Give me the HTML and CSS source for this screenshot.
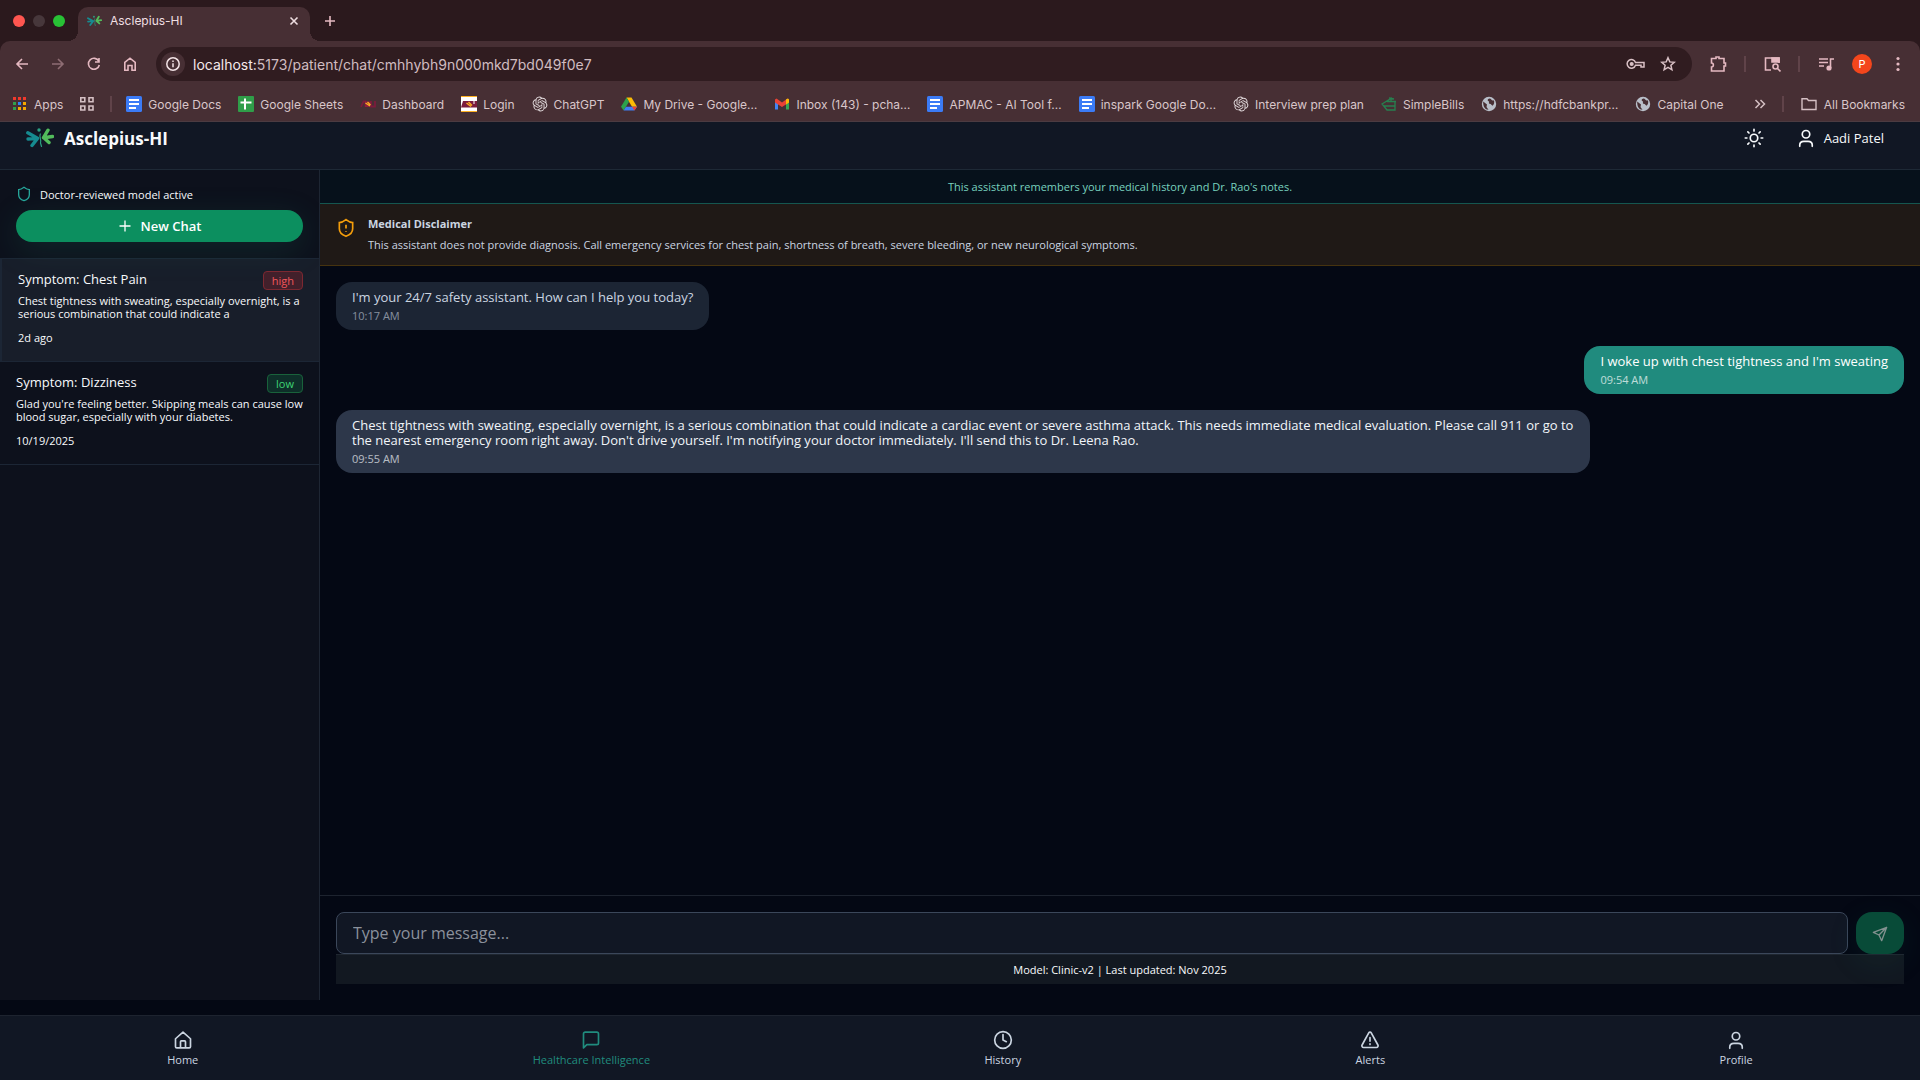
FILE: index.html
```html
<!DOCTYPE html>
<html lang="en">
<head>
<meta charset="utf-8">
<title>Asclepius-HI</title>
<link rel="stylesheet" href="styles.css">
</head>
<body>
<svg class="defs" aria-hidden="true">
  <defs>
    <symbol id="logo" viewBox="0 0 28 20">
      <g fill="none" stroke-linecap="round" stroke-linejoin="round">
        <path d="M1.800 4.800 L11.500 10.200 M2 11 L11 10.400 M6 17.500 L11.500 10.400" stroke="#168b90" stroke-width="3.400"/>
        <path d="M26.500 8.500 L17.500 9.800 M22 2.200 L17.500 9.600 L23 14.500" stroke="#52bd5c" stroke-width="3.400"/>
        <path d="M14.300 6 C12.800 9 15.800 12 14.500 15 L15.500 18.500" stroke="#2ba183" stroke-width="1.200"/>
      </g>
      <circle cx="13" cy="2" r="1.700" fill="#2ba183"/>
    </symbol>
    <symbol id="doc" viewBox="0 0 16 16"><rect width="16" height="16" rx="1.500" fill="#3b7bf6"/><path d="M3 4h10M3 8h10M3 12h7" stroke="#fff" stroke-width="2"/></symbol>
    <symbol id="gpt" viewBox="-1 -1 26 26"><path fill="#e2dadc" d="M22.2819 9.8211a5.9847 5.9847 0 0 0-.5157-4.9108 6.0462 6.0462 0 0 0-6.5098-2.9A6.0651 6.0651 0 0 0 4.9807 4.1818a5.9847 5.9847 0 0 0-3.9977 2.9 6.0462 6.0462 0 0 0 .7427 7.0966 5.98 5.98 0 0 0 .511 4.9107 6.051 6.051 0 0 0 6.5146 2.9001A5.9847 5.9847 0 0 0 13.2599 24a6.0557 6.0557 0 0 0 5.7718-4.2058 5.9894 5.9894 0 0 0 3.9977-2.9001 6.0557 6.0557 0 0 0-.7475-7.0729zm-9.022 12.6081a4.4755 4.4755 0 0 1-2.8764-1.0408l.1419-.0804 4.7783-2.7582a.7948.7948 0 0 0 .3927-.6813v-6.7369l2.02 1.1686a.071.071 0 0 1 .038.052v5.5826a4.504 4.504 0 0 1-4.4945 4.4944zm-9.6607-4.1254a4.4708 4.4708 0 0 1-.5346-3.0137l.142.0852 4.783 2.7582a.7712.7712 0 0 0 .7806 0l5.8428-3.3685v2.3324a.0804.0804 0 0 1-.0332.0615L9.74 19.9502a4.4992 4.4992 0 0 1-6.1408-1.6464zM2.3408 7.8956a4.485 4.485 0 0 1 2.3655-1.9728V11.6a.7664.7664 0 0 0 .3879.6765l5.8144 3.3543-2.0201 1.1685a.0757.0757 0 0 1-.071 0l-4.8303-2.7865A4.504 4.504 0 0 1 2.3408 7.872zm16.5963 3.8558L13.1038 8.364 15.1192 7.2a.0757.0757 0 0 1 .071 0l4.8303 2.7913a4.4944 4.4944 0 0 1-.6765 8.1042v-5.6772a.79.79 0 0 0-.407-.667zm2.0107-3.0231l-.142-.0852-4.7735-2.7818a.7759.7759 0 0 0-.7854 0L9.409 9.2297V6.8974a.0662.0662 0 0 1 .0284-.0615l4.8303-2.7866a4.4992 4.4992 0 0 1 6.6802 4.66zM8.3065 12.863l-2.02-1.1638a.0804.0804 0 0 1-.038-.0567V6.0742a4.4992 4.4992 0 0 1 7.3757-3.4537l-.142.0805L8.704 5.459a.7948.7948 0 0 0-.3927.6813zm1.0976-2.3654l2.602-1.4998 2.6069 1.4998v2.9994l-2.5974 1.4997-2.6067-1.4997Z"/></symbol>
    <symbol id="globe" viewBox="0 0 16 16"><circle cx="8" cy="8" r="7.200" fill="#b9bfc9"/><path d="M2.200 5.500 6 8.500 5.500 11l2 2.800C4 13.500 2 11 2.200 5.500ZM8.500 2.500c-2 .5-2.500 2-1 2.800 1.500.7-.5 1.700 1 2.400 2 .3 2 1.500 3 2 1.500-1 2.300-3.500 1.300-5.500-2 1-2.500-1.500-4.300-1.700Z" fill="#472f34"/></symbol>
    <symbol id="user" viewBox="0 0 24 24"><circle cx="12" cy="7.500" r="4.500"/><path d="M4.500 22v-1.500c0-3 2.500-4.500 5-4.500h5c2.500 0 5 1.500 5 4.500V22"/></symbol>
  </defs>
</svg>

<header class="browser">
  <div class="tabstrip">
    <div class="lights"><i class="light red"></i><i class="light dim"></i><i class="light green"></i></div>
    <div class="tab">
      <svg class="favicon"><use href="#logo"/></svg>
      <span class="tab-title">Asclepius-HI</span>
      <button class="plain" aria-label="Close tab"><svg width="10" height="10" viewBox="0 0 10 10"><path d="M1.500 1.500l7 7m0-7l-7 7" stroke="#eedde0" stroke-width="1.600"/></svg></button>
    </div>
    <button class="plain new-tab" aria-label="New tab"><svg width="12" height="12" viewBox="0 0 12 12"><path d="M6 1v10M1 6h10" stroke="#e5b9c1" stroke-width="1.600"/></svg></button>
  </div>

  <div class="toolbar">
    <div class="tools">
      <button class="tool" aria-label="Back"><svg viewBox="0 0 18 18"><path d="M15 9H4M9 4 4 9l5 5"/></svg></button>
      <button class="tool faded" aria-label="Forward"><svg viewBox="0 0 18 18"><path d="M3 9h11M9 4l5 5-5 5"/></svg></button>
      <button class="tool" aria-label="Reload"><svg viewBox="0 0 18 18"><path d="M13.800 6.200A5.500 5.500 0 1 0 14.300 10M14 3v4h-4"/></svg></button>
      <button class="tool" aria-label="Home page"><svg viewBox="0 0 18 18"><path d="M3.800 7.300 9 3.200l5.200 4.100v8H11V10.500H7v4.800H3.800Z"/></svg></button>
    </div>
    <div class="omnibox">
      <button class="plain info" aria-label="Site information"><svg width="16" height="16" viewBox="0 0 16 16" fill="none" stroke="#f3e3e6" stroke-width="1.500"><circle cx="8" cy="8" r="6.200"/><path d="M8 7.200v4M8 4.500v1.500"/></svg></button>
      <div class="url"><span class="host">localhost:</span>5173/patient/chat/cmhhybh9n000mkd7bd049f0e7</div>
      <button class="plain" aria-label="Passwords"><svg width="20" height="16" viewBox="0 0 20 16" fill="none" stroke="#d9c0c5" stroke-width="1.500"><path d="M9.500 6.500H18V11h-3V9.200H9.500A4.300 4.300 0 1 1 9.500 6.500Z"/><circle cx="5.700" cy="8" r="1.300" fill="#d9c0c5"/></svg></button>
      <button class="plain" aria-label="Bookmark this tab"><svg width="16" height="16" viewBox="0 0 16 16" fill="none" stroke="#d9c0c5" stroke-width="1.500"><path d="m8 1.700 1.800 4.200 4.500.4-3.400 3 1 4.500L8 11.400l-3.900 2.400 1-4.500-3.400-3 4.500-.4Z"/></svg></button>
    </div>
    <div class="tools spaced">
      <button class="tool" aria-label="Extensions"><svg viewBox="0 0 18 18"><path d="M2.500 3.500H7V2h3v1.500h5V8h1.500v3H15v5H2.500v-4c2.500 0 2.500-4 0-4Z"/></svg></button>
      <i class="rule"></i>
      <button class="tool" aria-label="Lens"><svg viewBox="0 0 18 18"><path d="M8 15H2.500V3H16v5"/><path d="M9 3h7v4H9Z" fill="#e5b9c1"/><circle cx="12.500" cy="11.500" r="2.500"/><path d="m14.500 13.500 3 3"/></svg></button>
      <i class="rule"></i>
    </div>
    <div class="tools">
      <button class="tool" aria-label="Media controls"><svg viewBox="0 0 18 18"><path d="M2 4h9M2 7.500h9M2 11h5M17 4h-3.500v9"/><circle cx="12" cy="13" r="1.800" fill="#e5b9c1"/></svg></button>
      <button class="tool" aria-label="Account"><span class="avatar">P</span></button>
      <button class="tool" aria-label="Menu"><svg viewBox="0 0 16 16" class="dots"><circle cx="8" cy="2.500" r="1.600"/><circle cx="8" cy="8" r="1.600"/><circle cx="8" cy="13.500" r="1.600"/></svg></button>
    </div>
  </div>

  <nav class="bookmarks" aria-label="Bookmarks">
    <a href="#" class="apps"><svg viewBox="0 0 14 14"><path d="M0 0h3v3H0zM5 0h3v3H5zM10 0h3v3h-3z" fill="#f2392c"/><path d="M0 5h3v3H0zM0 10h3v3H0z" fill="#31a04c"/><path d="M5 5h3v3H5z" fill="#2e83f7"/><path d="M10 5h3v3h-3zM5 10h3v3H5zM10 10h3v3h-3z" fill="#f5a700"/></svg>Apps</a>
    <button class="plain groups" aria-label="Tab groups"><svg width="16" height="16" viewBox="0 0 16 16" fill="none" stroke="#d5c0c4" stroke-width="1.600"><path d="M1.800 1.800h4v4h-4zM10 1.800h4v4h-4zM1.800 10h4v4h-4zM10 10h4v4h-4z"/></svg></button>
    <i class="rule"></i>
    <div class="links">
      <a href="#"><svg><use href="#doc"/></svg>Google Docs</a>
      <a href="#"><svg viewBox="0 0 16 16"><rect width="16" height="16" rx="1" fill="#2f9e49"/><path d="M7 2.500v11M2.500 6.500h11" stroke="#fff" stroke-width="2"/></svg>Google Sheets</a>
      <a href="#"><svg viewBox="0 0 16 16"><path d="M1 11 3.500 5.500h2V11M11 5v5.500h4V5" fill="none" stroke="#7b1c3c" stroke-width="1.800"/><path d="M5 5.500h6l-1 5.500H5Z" fill="#8d1d3d"/><path d="m5.500 7 4.500 3M7.500 6l3 3" stroke="#fdb022" stroke-width="1.300"/></svg>Dashboard</a>
      <a href="#"><svg viewBox="0 0 16 16"><path fill="#fff" d="M0 0h16v16H0z"/><path d="M0 0h16v1H0zM0 15h16v1H0z" fill="#fdb022"/><path d="M0 11.500 2 5h14v6.500Z" fill="#7b1c3c"/><path d="m5.500 7 4.500 3.500M7.500 6l3.500 3.500" stroke="#fdb022" stroke-width="1.400"/><path d="M13 5v3" stroke="#fff"/></svg>Login</a>
      <a href="#"><svg><use href="#gpt"/></svg>ChatGPT</a>
      <a href="#"><svg viewBox="0 0 16 16"><path d="M5.500 1.500h5L16 10.800h-5Z" fill="#fbbc05"/><path d="M5.500 1.500 0 10.800l2.600 3.700L8 5.800Z" fill="#2ca24c"/><path d="M2.600 14.500h10.800l2.600-3.700H5Z" fill="#3f7ef3"/><path d="m16 10.800-2.600 3.700L11 10.800Z" fill="#ea4335"/></svg>My Drive - Google…</a>
      <a href="#"><svg viewBox="0 0 16 16"><path d="M1 4v9.500h3V7Z" fill="#4285f4"/><path d="M15 4v9.500h-3V7Z" fill="#34a853"/><path d="M1 3.500 2.500 2.500 8 6.500l5.500-4L15 4v2.500L8 11 1 6.500Z" fill="#ea4335"/><path d="m12 3.500 2-1 1 1v3l-3 2Z" fill="#fbbc05"/></svg>Inbox (143) - pcha…</a>
      <a href="#"><svg><use href="#doc"/></svg>APMAC - AI Tool f…</a>
      <a href="#"><svg><use href="#doc"/></svg>inspark Google Do…</a>
      <a href="#"><svg><use href="#gpt"/></svg>Interview prep plan</a>
      <a href="#"><svg viewBox="0 0 16 16" fill="none" stroke="#27804f" stroke-width="1.300"><path d="m1 8 9-5.500v3H14V14H6Zm5-2.500h9M3 10h11M8 2l5 1"/></svg>SimpleBills</a>
      <a href="#"><svg><use href="#globe"/></svg>https://hdfcbankpr…</a>
      <a href="#"><svg><use href="#globe"/></svg>Capital One</a>
    </div>
    <button class="plain more" aria-label="More bookmarks"><svg width="12" height="12" viewBox="0 0 12 12" fill="none" stroke="#d5c0c4" stroke-width="1.500"><path d="m1.500 2 4 4-4 4M6.500 2l4 4-4 4"/></svg></button>
    <i class="rule"></i>
    <a href="#" class="all"><svg viewBox="0 0 16 16" fill="none" stroke="#d5c0c4" stroke-width="1.400"><path d="M1 2.700h5l1.500 1.800H15v9H1Z"/></svg>All Bookmarks</a>
  </nav>
</header>

<div class="app">
  <header class="topbar">
    <a href="#" class="brand"><svg width="28" height="20"><use href="#logo"/></svg><span>Asclepius-HI</span></a>
    <button class="plain" aria-label="Toggle theme"><svg class="line" viewBox="0 0 24 24"><circle cx="12" cy="12" r="4.500"/><path d="M12 1.500v2M12 20.500v2M1.500 12h2M20.500 12h2M4.600 4.600 6 6M18 18l1.400 1.400M4.600 19.400 6 18M18 6l1.400-1.400"/></svg></button>
    <button class="plain account"><svg class="line" viewBox="0 0 24 24"><use href="#user"/></svg>Aadi Patel</button>
  </header>

  <div class="workspace">
    <aside class="sidebar">
      <div class="side-head">
        <div class="status"><svg viewBox="0 0 24 24"><path d="M20 13c0 5-3.500 7.500-8 9-4.500-1.500-8-4-8-9V5.500C7 5.500 9.500 4 12 2c2.500 2 5 3.500 8 3.500Z"/></svg>Doctor-reviewed model active</div>
        <button class="new-chat"><svg width="14" height="14" viewBox="0 0 14 14"><path d="M7 1.500v11M1.500 7h11" stroke="currentColor" stroke-width="1.300"/></svg>New Chat</button>
      </div>
      <a href="#" class="thread current">
        <span class="thread-top"><span class="thread-title">Symptom: Chest Pain</span><span class="badge high">high</span></span>
        <span class="preview">Chest tightness with sweating, especially overnight, is a serious combination that could indicate a</span>
        <span class="date">2d ago</span>
      </a>
      <a href="#" class="thread">
        <span class="thread-top"><span class="thread-title">Symptom: Dizziness</span><span class="badge low">low</span></span>
        <span class="preview">Glad you're feeling better. Skipping meals can cause low blood sugar, especially with your diabetes.</span>
        <span class="date">10/19/2025</span>
      </a>
    </aside>

    <main class="chat">
      <p class="memory">This assistant remembers your medical history and Dr. Rao's notes.</p>
      <section class="disclaimer">
        <svg viewBox="0 0 24 24"><path d="M20 13c0 5-3.500 7.500-8 9-4.500-1.500-8-4-8-9V5.500C7 5.500 9.500 4 12 2c2.500 2 5 3.500 8 3.500ZM12 8v4.500M12 15.500v1"/></svg>
        <div><h2>Medical Disclaimer</h2><p>This assistant does not provide diagnosis. Call emergency services for chest pain, shortness of breath, severe bleeding, or new neurological symptoms.</p></div>
      </section>
      <div class="messages">
        <article class="bubble greeting"><p>I'm your 24/7 safety assistant. How can I help you today?</p><time>10:17 AM</time></article>
        <article class="bubble mine"><p>I woke up with chest tightness and I'm sweating</p><time>09:54 AM</time></article>
        <article class="bubble"><p>Chest tightness with sweating, especially overnight, is a serious combination that could indicate a cardiac event or severe asthma attack. This needs immediate medical evaluation. Please call 911 or go to the nearest emergency room right away. Don't drive yourself. I'm notifying your doctor immediately. I'll send this to Dr. Leena Rao.</p><time>09:55 AM</time></article>
      </div>
      <div class="composer">
        <form class="compose-row">
          <input type="text" placeholder="Type your message..." aria-label="Type your message">
          <button class="send" type="button" aria-label="Send" disabled><svg width="16" height="16" viewBox="0 0 24 24"><path d="M22 2 14.500 22l-4-8.500L2 9.500ZM22 2 10.500 13.500"/></svg></button>
        </form>
        <p class="model">Model: Clinic-v2 | Last updated: Nov 2025</p>
      </div>
    </main>
  </div>

  <nav class="bottom-nav" aria-label="Main">
    <a href="#"><svg viewBox="0 0 24 24"><path d="M3 10.500 12 2.500l9 8V20a1.500 1.500 0 0 1-1.500 1.500h-15A1.500 1.500 0 0 1 3 20ZM9 21.500V14a1 1 0 0 1 1-1h4a1 1 0 0 1 1 1v7.500"/></svg>Home</a>
    <a href="#" class="active"><svg viewBox="0 0 24 24"><path d="M21 15.500a2 2 0 0 1-2 2H7l-4 4V4.500a2 2 0 0 1 2-2h14a2 2 0 0 1 2 2Z"/></svg>Healthcare Intelligence</a>
    <a href="#"><svg viewBox="0 0 24 24"><circle cx="12" cy="12" r="10"/><path d="M12 5.500V12l4 2"/></svg>History</a>
    <a href="#"><svg viewBox="0 0 24 24"><path d="M10.500 3.500a1.700 1.700 0 0 1 3 0l8 14.500a2 2 0 0 1-1.700 3H4.200a2 2 0 0 1-1.700-3ZM12 9v4.500M12 16.500v1"/></svg>Alerts</a>
    <a href="#"><svg viewBox="0 0 24 24"><use href="#user"/></svg>Profile</a>
  </nav>
</div>
</body>
</html>
```
FILE: styles.css
```css
* { box-sizing: border-box; margin: 0; padding: 0; }
body {
  min-height: 100vh;
  display: flex;
  flex-direction: column;
  background: #040814;
  color: #f8fafc;
  font-family: "Open Sans", "Noto Sans", sans-serif;
  font-size: 13px;
}
a { color: inherit; text-decoration: none; }
button { font: inherit; color: inherit; border: 0; cursor: pointer; }
svg { flex: none; }
.defs { position: absolute; width: 0; height: 0; }
.plain { display: flex; align-items: center; background: none; }

/* Browser frame */
.browser {
  background: #2b191d;
  border-bottom: 1px solid #4c3b41;
  color: #d9c6ca;
  font-family: Inter, sans-serif;
  font-size: 12px;
}
.tabstrip { display: flex; align-items: center; height: 41px; }
.lights { display: flex; gap: 8px; padding: 0 13px; width: 78px; }
.light { width: 12px; height: 12px; border-radius: 50%; }
.red { background: #ff5650; }
.dim { background: #47373b; }
.green { background: #28c135; }
.tab {
  position: relative;
  align-self: flex-end;
  display: flex;
  align-items: center;
  gap: 8px;
  width: 232px;
  height: 34px;
  padding: 0 11px 7px 9px;
  border-radius: 10px 10px 0 0;
  background: #472f34;
  color: #f0dfe2;
}
.tab::before, .tab::after {
  content: "";
  position: absolute;
  bottom: 0;
  width: 10px;
  height: 10px;
}
.tab::before { left: -10px; background: radial-gradient(circle at 0 0, #2b191d 10px, #472f34 10px); }
.tab::after { right: -10px; background: radial-gradient(circle at 100% 0, #2b191d 10px, #472f34 10px); }
.favicon { width: 15px; height: 12px; }
.tab-title { flex: 1; }
.new-tab { padding: 0 14px; }

.toolbar {
  display: flex;
  align-items: center;
  height: 46px;
  padding: 0 4px;
  border-radius: 10px 10px 0 0;
  background: #472f34;
}
.tools { display: flex; align-items: center; }
.spaced { gap: 8px; padding: 0 8px; }
.tool { display: flex; align-items: center; justify-content: center; width: 36px; height: 36px; background: none; }
.tool svg { width: 18px; height: 18px; fill: none; stroke: #e5b9c1; stroke-width: 1.6px; }
.tool svg.dots { width: 16px; height: 16px; fill: #e5b9c1; stroke: none; }
.faded { opacity: .45; }
.rule { width: 2px; height: 16px; background: #604349; }
.avatar { width: 20px; height: 20px; border-radius: 50%; background: #f4461c; color: #fff; font-size: 11px; line-height: 20px; }
.omnibox {
  flex: 1;
  display: flex;
  align-items: center;
  gap: 14px;
  height: 34px;
  margin-left: 8px;
  padding: 0 16px 0 5px;
  border-radius: 17px;
  background: #301c20;
}
.info { justify-content: center; width: 24px; height: 24px; border-radius: 50%; background: #472f34; }
.url { flex: 1; margin-left: -6px; font-size: 14px; color: #d0bcc0; }
.host { color: #f5e9eb; }

.bookmarks { display: flex; align-items: center; height: 34px; padding: 0 15px 0 13px; background: #472f34; white-space: nowrap; }
.bookmarks a { display: flex; align-items: center; gap: 6px; }
.bookmarks a svg { width: 16px; height: 16px; }
.bookmarks .apps { gap: 7px; }
.bookmarks .apps svg { width: 14px; height: 14px; }
.groups { padding: 0 15px 0 16px; }
.links { flex: 1; display: flex; gap: 17px; padding-left: 14px; }
.more { padding: 0 16px; }
.bookmarks .all { gap: 7px; padding-left: 17px; }

/* Application */
.app { flex: 1; display: flex; flex-direction: column; }
.topbar {
  display: flex;
  align-items: center;
  gap: 32px;
  height: 48px;
  padding: 0 36px 15px 26px;
  border-bottom: 1px solid #1e2936;
  background: #111724;
}
.brand { display: flex; align-items: center; gap: 10px; margin-right: auto; font-size: 17px; font-weight: 700; }
.line { width: 20px; height: 20px; fill: none; stroke: #f8fafc; stroke-width: 2px; stroke-linecap: round; }
.account { gap: 8px; font-weight: 500; }

.workspace { flex: 1; display: flex; margin-bottom: 15px; }
.sidebar { width: 320px; border-right: 1px solid #1e2633; background: #0d111c; overflow: hidden; }
.side-head { padding: 16px; border-bottom: 1px solid #1c2635; }
.status { display: flex; align-items: center; gap: 8px; height: 16px; margin-bottom: 8px; font-size: 11px; font-weight: 500; }
.status svg { width: 16px; height: 16px; fill: none; stroke: #26a69a; stroke-width: 2px; }
.new-chat {
  display: flex;
  align-items: center;
  justify-content: center;
  gap: 9px;
  width: 100%;
  height: 32px;
  border-radius: 16px;
  background: #0c8f5f;
  color: #fff;
  font-weight: 600;
  box-shadow: 0 8px 32px rgba(32, 140, 110, .18);
}
.thread { display: block; padding: 12px 16px 13px; border-bottom: 1px solid #1c2635; }
.current { border-left: 2px solid #1c2635; background: rgba(38, 47, 60, .45); }
.thread-top { display: flex; justify-content: space-between; align-items: center; height: 19px; margin-bottom: 4px; }
.thread-title { line-height: 16px; padding-bottom: 4px; font-weight: 500; }
.badge { height: 19px; padding: 0 8px; border: 1px solid; border-radius: 4px; font-size: 11px; line-height: 17px; }
.high { color: #f2575b; background: #42202b; border-color: #7c2831; }
.low { color: #3ed274; background: #0e2f29; border-color: #19623b; }
.preview { display: block; font-size: 11px; line-height: 13px; margin-bottom: 8px; }
.date { display: block; font-size: 11px; line-height: 20px; }

.chat { flex: 1; min-width: 0; display: flex; flex-direction: column; }
.memory { padding: 8px 16px; border-bottom: 1px solid #15564f; background: #06111b; color: #78d2bf; font-size: 11px; line-height: 17px; text-align: center; }
.disclaimer { display: flex; align-items: flex-start; gap: 12px; padding: 12px 16px; border-bottom: 1px solid #46330f; background: #1f1916; color: #cbd5e1; font-size: 11px; }
.disclaimer svg { width: 20px; height: 20px; margin-top: 2px; fill: none; stroke: #f59e0b; stroke-width: 2px; }
.disclaimer h2 { margin-bottom: 4px; font-size: 11px; font-weight: 700; line-height: 16px; }
.disclaimer p { line-height: 17px; }
.messages { flex: 1; display: flex; flex-direction: column; align-items: flex-start; gap: 16px; padding: 16px; }
.bubble { max-width: 80%; padding: 8px 16px; border-radius: 16px; background: #2d374a; color: #f1f5f9; line-height: 15px; }
.bubble time { display: block; margin-top: 4px; font-size: 11px; line-height: 13px; opacity: .7; }
.greeting { background: #1c2534; color: #cbd5e1; }
.greeting time { opacity: .6; }
.mine { align-self: flex-end; background: #208b7e; color: #fff; }

.composer { padding: 16px; border-top: 1px solid #1d232f; }
.compose-row { display: flex; gap: 8px; }
.compose-row input {
  flex: 1;
  height: 42px;
  padding: 0 16px;
  border: 1px solid #3b475a;
  border-radius: 8px;
  background: #111724;
  color: #f8fafc;
  font: inherit;
  font-size: 16px;
}
.compose-row input::placeholder { color: #8b919c; opacity: 1; }
.send { width: 48px; border-radius: 16px; background: #084b38; box-shadow: 0 8px 32px rgba(32, 140, 110, .1); }
.send svg { fill: none; stroke: #82918f; stroke-width: 2px; stroke-linejoin: round; vertical-align: middle; }
.model { border-top: 1px solid #1f2630; background: #121821; font-size: 11px; line-height: 29px; text-align: center; }

.bottom-nav { display: flex; justify-content: space-around; height: 65px; padding-top: 14px; border-top: 1px solid #1d232f; background: #111724; color: #cbd5e1; }
.bottom-nav a { display: flex; flex-direction: column; align-items: center; gap: 2px; font-size: 11px; line-height: 16px; }
.bottom-nav svg { width: 20px; height: 20px; fill: none; stroke: currentColor; stroke-width: 2px; stroke-linecap: round; stroke-linejoin: round; }
.bottom-nav .active { color: #208c7e; }
```
